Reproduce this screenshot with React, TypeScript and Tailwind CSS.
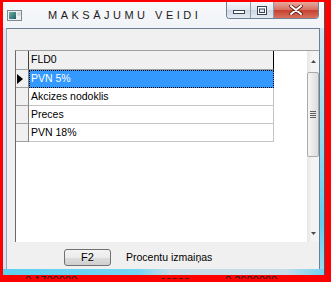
import React from "react";

const rows = ["PVN 5%", "Akcizes nodoklis", "Preces", "PVN 18%"];

function TitleIcon() {
  return (
    <svg width="15" height="11" viewBox="0 0 15 11">
      <defs>
        <linearGradient id="ti" x1="0" y1="0" x2="1" y2="1">
          <stop offset="0" stopColor="#6fb3a4" />
          <stop offset="1" stopColor="#1d5e66" />
        </linearGradient>
      </defs>
      <rect x="0.5" y="0.5" width="14" height="10" fill="#eef0f2" stroke="#7d8790" />
      <rect x="2" y="2" width="7" height="7" fill="url(#ti)" />
      <rect x="11" y="3" width="2" height="2" fill="#ffffff" stroke="#9aa3ab" strokeWidth="0.5" />
    </svg>
  );
}

function CaptionButtons() {
  return (
    <div className="ml-auto mr-[5px] flex h-[17px] border border-t-0 border-[#6f8196] rounded-b-[4px] overflow-hidden">
      <div className="w-[24px] h-full flex items-center justify-center bg-[linear-gradient(to_bottom,#f6f8fb,#dfe6ee_50%,#cdd7e3_51%,#e3eaf2)] border-r border-[#8a9bb0]">
        <svg width="12" height="5" viewBox="0 0 12 5" className="mt-[5px]">
          <rect x="0.5" y="0.5" width="11" height="3" fill="#ffffff" stroke="#3c4655" />
        </svg>
      </div>
      <div className="w-[23px] h-full flex items-center justify-center bg-[linear-gradient(to_bottom,#f6f8fb,#dfe6ee_50%,#cdd7e3_51%,#e3eaf2)] border-r border-[#8a9bb0]">
        <svg width="10" height="9" viewBox="0 0 10 9">
          <rect x="0.5" y="0.5" width="9" height="8" fill="#ffffff" stroke="#3c4655" />
          <rect x="2.5" y="3" width="5" height="3.5" fill="#dfe6ee" stroke="#3c4655" />
        </svg>
      </div>
      <div className="w-[44px] h-full flex items-center justify-center bg-[linear-gradient(to_bottom,#e8a99e,#d56f60_50%,#c5412f_51%,#d9705c)]">
        <svg width="14" height="10" viewBox="0 0 14 10">
          <path d="M2 1 L12 9 M12 1 L2 9" stroke="#5a1d16" strokeWidth="3.6" strokeLinecap="round" />
          <path d="M2 1 L12 9 M12 1 L2 9" stroke="#ffffff" strokeWidth="2" strokeLinecap="round" />
        </svg>
      </div>
    </div>
  );
}

function Scrollbar() {
  return (
    <div className="w-[12px] h-full flex flex-col bg-[linear-gradient(to_right,#e6e6e6,#f4f4f4_40%,#f4f4f4)]">
      <div className="h-[21px] flex items-center justify-center">
        <svg width="5" height="3" viewBox="0 0 5 3">
          <path d="M0 3 L2.5 0 L5 3 Z" fill="#4a4a4a" />
        </svg>
      </div>
      <div className="h-[85px] mx-[0px] rounded-[2px] border border-[#a9a9a9] bg-[linear-gradient(to_right,#f6f6f6,#e9e9e9_50%,#dcdcdc)] flex items-center justify-center">
        <div className="flex flex-col gap-[1px]">
          <div className="w-[6px] h-[1px] bg-[#5e5e5e]" />
          <div className="w-[6px] h-[1px] bg-[#5e5e5e]" />
          <div className="w-[6px] h-[1px] bg-[#5e5e5e]" />
          <div className="w-[6px] h-[1px] bg-[#5e5e5e]" />
        </div>
      </div>
      <div className="flex-1" />
      <div className="h-[17px] flex items-center justify-center">
        <svg width="5" height="3" viewBox="0 0 5 3">
          <path d="M0 0 L5 0 L2.5 3 Z" fill="#4a4a4a" />
        </svg>
      </div>
    </div>
  );
}

function Grid() {
  return (
    <div className="ml-[8px] mt-[21px] w-[304px] h-[192px] flex bg-white border-l border-t border-l-[#696969] border-t-[#a0a0a0]">
      <div className="flex-1 flex flex-col">
        <div className="flex h-[19px]">
          <div className="w-[13px] bg-[#f0f0f0] border-r border-b border-r-[#404040] border-b-[#a0a0a0]" />
          <div className="w-[245px] bg-[#f0f0f0] border-r border-b border-r-[#000000] border-b-[#a0a0a0] pl-[2px] flex items-center text-[10.5px] text-black">
            FLD0
          </div>
        </div>
        {rows.map((r, i) => (
          <div key={r} className="flex h-[18px]">
            <div className="w-[13px] bg-[#f0f0f0] border-r border-b border-r-[#808080] border-b-[#a0a0a0] flex items-center pl-[1px]">
              {i === 0 && (
                <svg width="6" height="10" viewBox="0 0 6 10">
                  <path d="M0 0 L6 5 L0 10 Z" fill="#000000" />
                </svg>
              )}
            </div>
            {i === 0 ? (
              <div className="w-[245px] bg-[#3399ff] border border-dotted border-black pl-[1px] flex items-center text-[10.5px] text-white">
                {r}
              </div>
            ) : (
              <div className="w-[245px] border-r border-b border-[#c4c4c4] pl-[2px] flex items-center text-[10.5px] text-black">
                {r}
              </div>
            )}
          </div>
        ))}
      </div>
      <Scrollbar />
    </div>
  );
}

export default function App() {
  return (
    <div className="w-[331px] h-[282px] bg-[#ff0000] overflow-hidden pl-[3px] pt-[2px] font-['Liberation_Sans',Arial,sans-serif]">
      <div className="w-[322px] h-[273px] flex flex-col bg-[linear-gradient(to_bottom,#f7f8fa,#e9eef4_20%,#dfe8f1)] border-r border-[#3e5874]">
        <div className="h-[26px] flex items-start">
          <div className="ml-[4px] mt-[8px]">
            <TitleIcon />
          </div>
          <div className="ml-[26px] mt-[7px] text-[11px] leading-[12px] tracking-[3.5px] text-[#1b1b1b]">
            MAKSĀJUMU VEIDI
          </div>
          <CaptionButtons />
        </div>
        <div className="flex h-[241px]">
          <div className="w-[3px] bg-[#dbe6f0]" />
          <div className="w-[314px] flex flex-col bg-[#f0f0f0] border-l border-t border-r border-l-[#93a9c3] border-t-[#6d7f93] border-r-[#6d7f93]">
            <Grid />
            <div className="mt-[7px] flex items-center">
              <div className="ml-[57px] w-[47px] h-[17px] rounded-[3px] border border-[#707070] bg-[linear-gradient(to_bottom,#f3f3f3,#ebebeb_50%,#dddddd_51%,#cfcfcf)] flex items-center justify-center text-[11px] text-black">
                F2
              </div>
              <div className="ml-[15px] text-[10.5px] text-black">Procentu izmaiņas</div>
            </div>
          </div>
          <div className="w-[4px] bg-[linear-gradient(to_bottom,#cfe6f2,#8ed9f0_50%,#62cdee_80%,#9adcf0)]" />
        </div>
        <div className="h-[6px] bg-[linear-gradient(to_right,#5fd0f0_0%,#74d6f2_42%,#c7dce8_52%,#c7dce8_88%,#6fd3f1_100%)]" />
      </div>
      <div className="h-[4px] overflow-hidden flex text-[11px] leading-[14px] text-[#1a1a1a]">
        <div className="ml-[22px] w-[135px] mt-[-2px]">0.1700000</div>
        <div className="w-[65px] mt-[-2px]">cenas</div>
        <div className="mt-[-2px]">0.2600000</div>
      </div>
    </div>
  );
}
